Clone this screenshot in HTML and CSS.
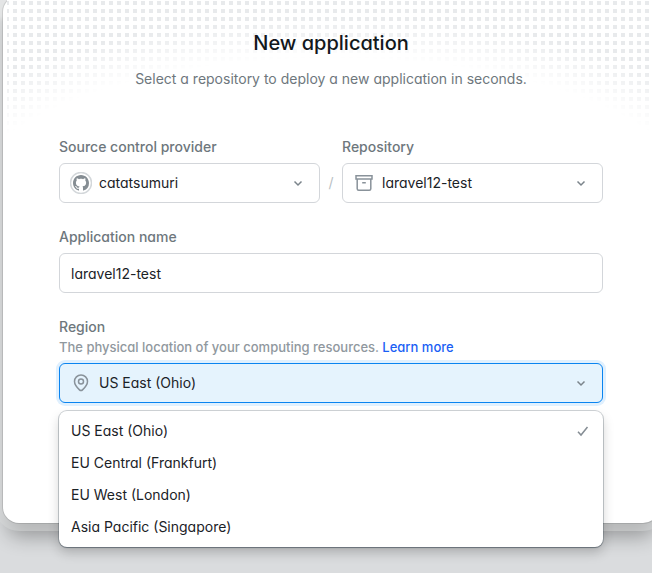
FILE: index.html
```html
<!DOCTYPE html>
<html lang="en">

<head>
    <meta charset="utf-8">
    <title>New application</title>
    <link rel="stylesheet" href="styles.css">
</head>

<body>
    <div class="modal">
        <div class="dots"></div>

        <div class="header">
            <h1 class="title">New application</h1>
            <p class="subtitle">Select a repository to deploy a new application in seconds.</p>
        </div>

        <form class="form">
            <div class="row">
                <div class="field">
                    <label class="label" for="provider">Source control provider</label>
                    <div class="control">
                        <svg class="icon avatar" viewBox="0 0 22 22">
                            <circle cx="11" cy="11" r="10.5" fill="#fff" stroke="#d3d7da"/>
                            <path transform="translate(3 3)" fill="#858d93" d="M8 0C3.58 0 0 3.58 0 8c0 3.54 2.29 6.53 5.47 7.59.4.07.55-.17.55-.38 0-.19-.01-.82-.01-1.49-2.01.37-2.53-.49-2.69-.94-.09-.23-.48-.94-.82-1.13-.28-.15-.68-.52-.01-.53.63-.01 1.08.58 1.23.82.72 1.21 1.87.87 2.33.66.07-.52.28-.87.51-1.07-1.78-.2-3.64-.89-3.64-3.95 0-.87.31-1.59.82-2.15-.08-.2-.36-1.02.08-2.12 0 0 .67-.21 2.2.82.64-.18 1.32-.27 2-.27s1.36.09 2 .27c1.53-1.04 2.2-.82 2.2-.82.44 1.1.16 1.92.08 2.12.51.56.82 1.27.82 2.15 0 3.07-1.87 3.75-3.65 3.95.29.25.54.73.54 1.48 0 1.07-.01 1.93-.01 2.2 0 .21.15.46.55.38A8.01 8.01 0 0 0 16 8c0-4.42-3.58-8-8-8z"/>
                        </svg>
                        <select class="input select" id="provider">
                            <option>catatsumuri</option>
                        </select>
                        <svg class="chevron" viewBox="0 0 16 16"><path d="M4.5 6.5 8 10l3.5-3.5"/></svg>
                    </div>
                </div>

                <div class="slash">/</div>

                <div class="field">
                    <label class="label" for="repository">Repository</label>
                    <div class="control">
                        <svg class="icon" viewBox="0 0 22 22">
                            <path d="M3 3.7h16v3.2H3zM4.200 7v9.800a1.500 1.500 0 0 0 1.500 1.500h10.600a1.500 1.500 0 0 0 1.500-1.500V7M9.200 10.700h3.600"/>
                        </svg>
                        <select class="input select" id="repository">
                            <option>laravel12-test</option>
                        </select>
                        <svg class="chevron" viewBox="0 0 16 16"><path d="M4.5 6.5 8 10l3.5-3.5"/></svg>
                    </div>
                </div>
            </div>

            <div class="field">
                <label class="label" for="name">Application name</label>
                <input class="input" id="name" type="text" value="laravel12-test">
            </div>

            <div class="field">
                <label class="label" for="region">Region</label>
                <p class="hint">The physical location of your computing resources. <a class="link" href="#">Learn more</a></p>
                <div class="control">
                    <svg class="icon" viewBox="0 0 22 22">
                        <path d="M11 18.600c-.6 0-1.100-.3-1.500-.7C7 15.500 4.500 12.800 4.500 9.500a6.500 6.500 0 0 1 13 0c0 3.300-2.500 6-5 8.400-.4.400-.9.700-1.500.700z"/>
                        <circle cx="11" cy="9.5" r="2.5"/>
                    </svg>
                    <select class="input select open" id="region">
                        <option>US East (Ohio)</option>
                        <option>EU Central (Frankfurt)</option>
                        <option>EU West (London)</option>
                        <option>Asia Pacific (Singapore)</option>
                    </select>
                    <svg class="chevron" viewBox="0 0 16 16"><path d="M4.5 6.5 8 10l3.5-3.5"/></svg>

                    <ul class="menu" role="listbox" aria-label="Region">
                        <li class="option" role="option" aria-selected="true">
                            US East (Ohio)
                            <svg class="check" viewBox="0 0 16 16"><path d="M3 8.8 6 12l6.5-8"/></svg>
                        </li>
                        <li class="option" role="option">EU Central (Frankfurt)</li>
                        <li class="option" role="option">EU West (London)</li>
                        <li class="option" role="option">Asia Pacific (Singapore)</li>
                    </ul>
                </div>
            </div>
        </form>
    </div>
</body>

</html>
```

FILE: styles.css
```css
* {
    box-sizing: border-box;
}

html {
    height: 100%;
    overflow: hidden;
    background: linear-gradient(#f2f3f4 16px, #dadcde 22px);
}

body {
    margin: 0;
    height: 100%;
    overflow: hidden;
    font-family: Inter, "Liberation Sans", sans-serif;
    font-feature-settings: "cv11";
    font-size: 14px;
    line-height: 20px;
    color: #1b2227;
}

/* the dialog runs a little past the top and right of the window */
.modal {
    position: relative;
    margin: -4px -7px 0 3px;
    padding: 33px 56px 120px;
    background: #fff;
    border-radius: 16px;
    box-shadow: 0 0 0 1px rgba(0, 0, 0, .1), 0 0 0 8px rgba(214, 215, 215, .5), 0 18px 20px -5px rgba(0, 0, 0, .32);
}

.dots {
    position: absolute;
    inset: 4px 4px auto;
    height: 140px;
    background-image: linear-gradient(90deg, #fff 4px, transparent 4px), linear-gradient(#fff 1px, #e8eaec 1px 5px, #fff 5px);
    background-size: 8px 8px;
    background-position: 2px 0, 0 0;
    -webkit-mask-image: radial-gradient(58% 150px at 50% 204px, transparent 97%, #000 124%);
    mask-image: radial-gradient(58% 150px at 50% 204px, transparent 97%, #000 124%);
}

.header {
    position: relative;
    text-align: center;
}

.title {
    margin: 0 0 11px;
    font-size: 20px;
    line-height: 28px;
    font-weight: 500;
    color: #12181c;
}

.subtitle {
    margin: 0 0 47px;
    line-height: 22px;
    color: #6e777d;
}

.form {
    display: flex;
    flex-direction: column;
    gap: 24px;
}

.row {
    display: flex;
    align-items: flex-end;
}

.field {
    flex: 1;
    min-width: 0;
}

.label {
    display: block;
    margin-bottom: 6px;
    font-weight: 500;
    color: #6e777d;
}

.slash {
    width: 22px;
    line-height: 40px;
    text-align: center;
    color: #b9bfc4;
}

.hint {
    margin: -6px 0 6px;
    font-size: 13px;
    font-weight: 500;
    color: #90989e;
}

.link {
    color: #1a5ff5;
    text-decoration: none;
}

.control {
    position: relative;
}

.input {
    display: block;
    width: 100%;
    height: 40px;
    padding: 0 11px;
    border: 1px solid #d3d6da;
    border-radius: 6px;
    background: #fff;
    font: inherit;
    font-feature-settings: inherit;
    color: inherit;
    outline: none;
}

.select {
    appearance: none;
    padding: 0 39px;
}

.select.open {
    border-color: #0a84f0;
    background: #e5f3fd;
    box-shadow: 0 0 0 3px #e0f0fe;
}

.icon {
    position: absolute;
    top: 9px;
    left: 11px;
    width: 22px;
    height: 22px;
    fill: none;
    stroke: #89929a;
    stroke-width: 1.5;
    pointer-events: none;
}

.avatar {
    stroke: none;
}

.chevron {
    position: absolute;
    top: 12px;
    right: 14px;
    width: 16px;
    height: 16px;
    fill: none;
    stroke: #7b848b;
    stroke-width: 1.5;
    pointer-events: none;
}

.menu {
    position: absolute;
    top: 48px;
    left: 0;
    right: 0;
    margin: 0;
    padding: 4px 0;
    list-style: none;
    background: #fff;
    border-radius: 8px;
    box-shadow: 0 0 0 1px rgba(40, 60, 75, .22), 0 1px 1px rgba(20, 35, 45, .35), 0 6px 12px rgba(0, 0, 0, .18);
}

.option {
    display: flex;
    align-items: center;
    justify-content: space-between;
    height: 32px;
    padding: 0 12px;
}

.check {
    width: 16px;
    height: 16px;
    fill: none;
    stroke: #858d94;
    stroke-width: 1.5;
}
```
